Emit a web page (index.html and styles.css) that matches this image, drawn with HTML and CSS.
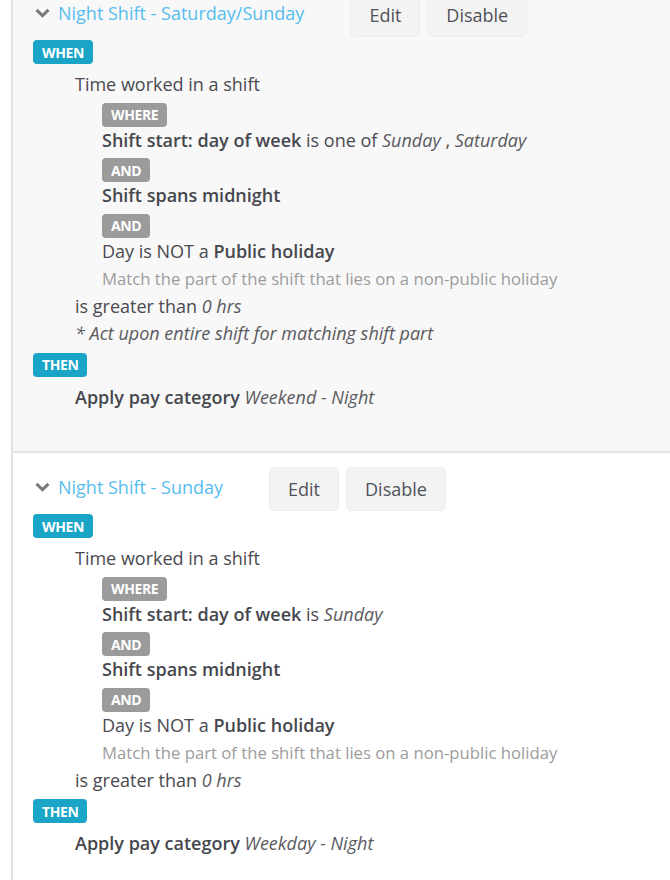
FILE: index.html
```html
<!DOCTYPE html>
<html>
<head>
<meta charset="utf-8">
<link rel="stylesheet" href="styles.css">
</head>
<body>
<div class="list">
  <section class="rule rule-first">
    <div class="rule-head">
      <a class="rule-title"><svg class="chev" width="15" height="10" viewBox="0 0 15 10"><path d="M1.5 1.8 L7.5 7.6 L13.5 1.8" fill="none" stroke="#7b7b7b" stroke-width="3"/></svg>Night Shift - Saturday/Sunday</a>
      <div class="btns"><button class="btn">Edit</button><button class="btn">Disable</button></div>
    </div>
    <div class="badge-row when-row"><span class="badge teal">WHEN</span></div>
    <div class="lvl1">
      <div class="line">Time worked in a shift</div>
      <div class="lvl2">
        <div class="badge-row"><span class="badge gray">WHERE</span></div>
        <div class="line"><b>Shift start: day of week</b> is one of <i>Sunday</i> , <i>Saturday</i></div>
        <div class="badge-row"><span class="badge gray">AND</span></div>
        <div class="line"><b>Shift spans midnight</b></div>
        <div class="badge-row"><span class="badge gray">AND</span></div>
        <div class="line">Day is NOT a <b>Public holiday</b></div>
        <div class="line sub">Match the part of the shift that lies on a non-public holiday</div>
      </div>
      <div class="line">is greater than <i>0 hrs</i></div>
      <div class="line"><i>* Act upon entire shift for matching shift part</i></div>
    </div>
    <div class="badge-row then-row"><span class="badge teal">THEN</span></div>
    <div class="lvl1">
      <div class="line"><b>Apply pay category</b> <i>Weekend - Night</i></div>
    </div>
  </section>
  <section class="rule rule-second">
    <div class="rule-head">
      <a class="rule-title"><svg class="chev" width="15" height="10" viewBox="0 0 15 10"><path d="M1.5 1.8 L7.5 7.6 L13.5 1.8" fill="none" stroke="#7b7b7b" stroke-width="3"/></svg>Night Shift - Sunday</a>
      <div class="btns"><button class="btn">Edit</button><button class="btn">Disable</button></div>
    </div>
    <div class="badge-row when-row"><span class="badge teal">WHEN</span></div>
    <div class="lvl1">
      <div class="line">Time worked in a shift</div>
      <div class="lvl2">
        <div class="badge-row"><span class="badge gray">WHERE</span></div>
        <div class="line"><b>Shift start: day of week</b> is <i>Sunday</i></div>
        <div class="badge-row"><span class="badge gray">AND</span></div>
        <div class="line"><b>Shift spans midnight</b></div>
        <div class="badge-row"><span class="badge gray">AND</span></div>
        <div class="line">Day is NOT a <b>Public holiday</b></div>
        <div class="line sub">Match the part of the shift that lies on a non-public holiday</div>
      </div>
      <div class="line">is greater than <i>0 hrs</i></div>
    </div>
    <div class="badge-row then-row"><span class="badge teal">THEN</span></div>
    <div class="lvl1">
      <div class="line"><b>Apply pay category</b> <i>Weekday - Night</i></div>
    </div>
  </section>
</div>
</body>
</html>
```
FILE: styles.css
```css
html, body {
  margin: 0;
  padding: 0;
  background: #ffffff;
  overflow: hidden;
}
body {
  font-family: "Open Sans", Lato, sans-serif;
  color: #4a4a50;
  font-size: 18px;
}
.list {
  margin-left: 11px;
  margin-top: -21px;
  border-left: 2px solid #e3e3e3;
  min-height: 920px;
}
.rule {
  padding: 14px 0 40px 20px;
}
.rule-first {
  background: #f8f8f8;
  border-bottom: 2px solid #e2e6ea;
}
.rule-second {
  background: #ffffff;
}
.rule-head {
  display: flex;
  align-items: center;
  height: 44px;
}
.rule-title {
  display: flex;
  align-items: center;
  color: #56bdee;
  font-size: 18px;
  margin-left: 2px;
  margin-top: -4px;
}
.chev {
  margin-right: 8px;
}
.btns {
  display: flex;
  gap: 7px;
  margin-left: 46px;
}
.btn {
  font-family: inherit;
  font-size: 18px;
  color: #4f5259;
  background: #f3f3f3;
  border: 1px solid #eeeeee;
  border-radius: 5px;
  height: 44px;
  padding: 0 18px;
}
.badge-row {
  display: flex;
  padding-top: 4px;
  height: 24px;
}
.when-row {
  padding-top: 3px;
  margin-bottom: 7px;
}
.then-row {
  margin-top: 1px;
  margin-bottom: 7px;
}
.badge {
  display: inline-flex;
  align-items: center;
  height: 24px;
  padding: 0 9px;
  border-radius: 4px;
  color: #ffffff;
  font-weight: 700;
  font-size: 14px;
  letter-spacing: -0.4px;
}
.teal {
  background: #1aa5c7;
}
.gray {
  background: #9b9b9b;
}
.lvl1 {
  padding-left: 42px;
}
.lvl2 {
  padding-left: 27px;
}
.line {
  line-height: 27.5px;
  white-space: nowrap;
}
.line b {
  font-weight: 600;
  color: #45474d;
}
.line i {
  color: #5a5a5f;
}
.sub {
  color: #9c9c9c;
  font-size: 16.7px;
}
```
